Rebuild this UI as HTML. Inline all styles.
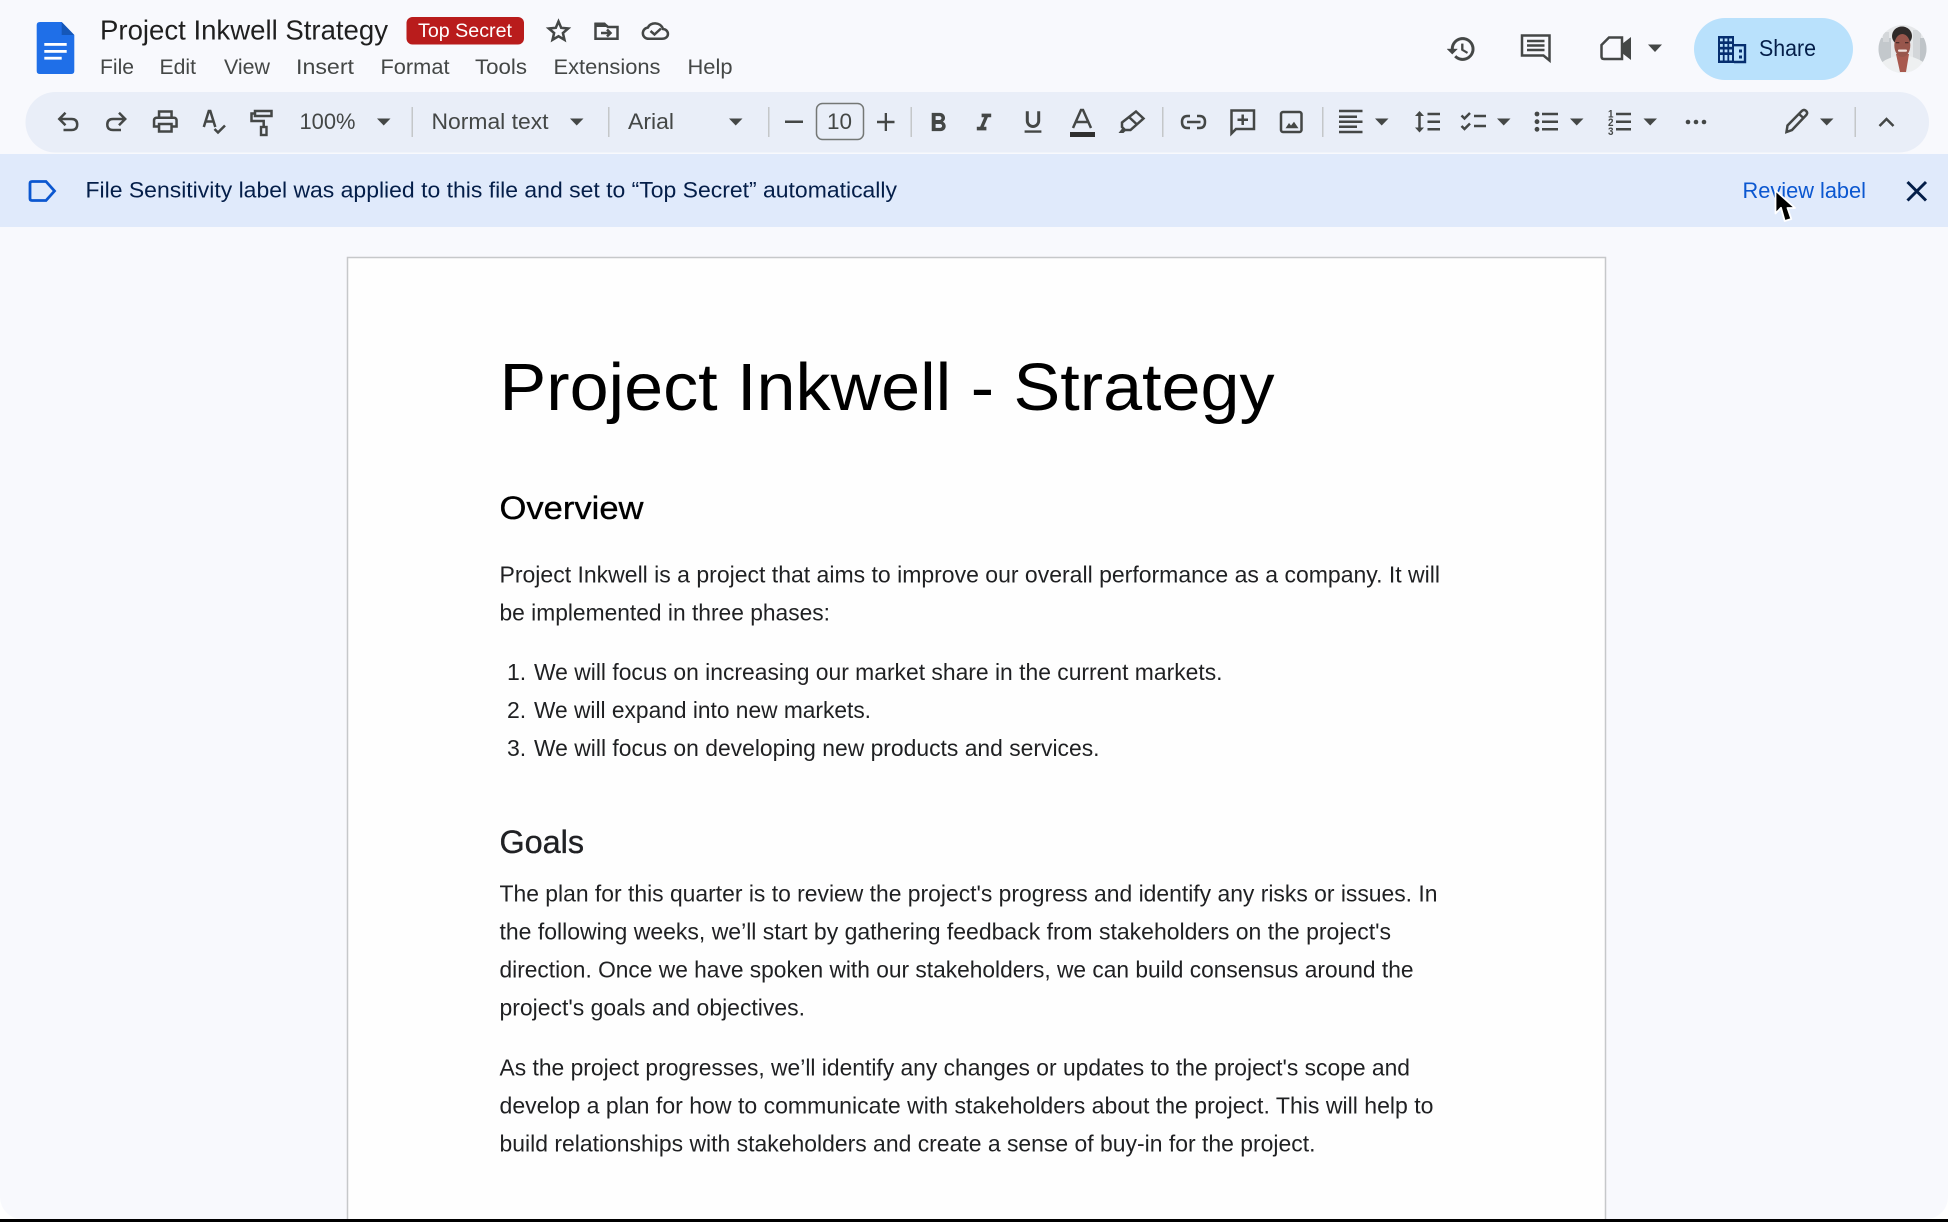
<!DOCTYPE html>
<html><head><meta charset="utf-8"><title>Project Inkwell Strategy</title>
<style>
html,body{margin:0;padding:0;background:#fff;width:1948px;height:1222px;overflow:hidden}
svg{display:block}
text{font-family:"Liberation Sans",Arial,sans-serif;fill:#1f1f1f}
.b{font-size:23px;fill:#1f2022}
.m{font-size:21.5px;fill:#444746}
.t{font-size:22.5px;fill:#444746}
.i{fill:#444746}
.s{fill:none;stroke:#444746;stroke-width:2.5}
</style></head><body>
<svg xmlns="http://www.w3.org/2000/svg" width="1948" height="1222" viewBox="0 0 1948 1222">
<defs><clipPath id="av"><circle cx="1902.5" cy="49" r="24"/></clipPath></defs>
<rect width="1948" height="1222" fill="#fff"/>
<rect x="0" y="-40" width="1948" height="1259" rx="22" fill="#f8f9fd"/>
<rect y="1219" width="1948" height="3" fill="#000"/>

<!-- logo -->
<path d="M40 22H61.7L74.3 35V71Q74.3 74 71 74H40Q36.7 74 36.7 71V25Q36.7 22 40 22Z" fill="#1f6fe8"/>
<path d="M61.7 22L74.3 35H61.7Z" fill="#1557b8"/>
<rect x="44.3" y="43" width="22.4" height="2.8" fill="#fff"/><rect x="44.3" y="50" width="22.4" height="2.8" fill="#fff"/><rect x="44.3" y="56.8" width="17.4" height="2.8" fill="#fff"/>

<!-- title row -->
<text x="100" y="39.5" font-size="27.5" textLength="288" lengthAdjust="spacingAndGlyphs" style="fill:#1f1f1f">Project Inkwell Strategy</text>
<rect x="406.5" y="17" width="117.5" height="27.5" rx="6" fill="#b91c1c"/>
<text x="418" y="37" font-size="19.5" textLength="94" lengthAdjust="spacingAndGlyphs" style="fill:#fff">Top Secret</text>
<path class="i" stroke="#444746" stroke-width=".5" transform="translate(558.500,31) scale(1.2) translate(-12,-12)" d="M22 9.24l-7.19-.62L12 2 9.19 8.63 2 9.24l5.46 4.73L5.82 21 12 17.27 18.18 21l-1.63-7.03L22 9.24zM12 15.4l-3.76 2.27 1-4.28-3.32-2.88 4.38-.38L12 6.1l1.71 4.04 4.38.38-3.32 2.88 1 4.28L12 15.4z"/>
<path class="s" d="M595.500 24H604.500L608 27H617.500V38.800H595.500Z"/><path class="i" d="M594.500 22.500H605L608.500 27H594.500Z"/><path class="s" stroke-width="2.200" d="M601 33H610.500M607 29.500L610.500 33L607 36.500"/>
<path class="s" d="M649 38.800H662C670 38.800 669.500 29.500 663 29C660.500 21.500 650 22 648 27.500C641 28.500 641 38.800 649 38.800Z"/><path class="s" stroke-width="2.200" d="M650.500 31L654.500 34.500L661 28.500"/>

<!-- menu -->
<text class="m" x="100" y="74" textLength="34" lengthAdjust="spacingAndGlyphs">File</text>
<text class="m" x="159.500" y="74" textLength="36.500" lengthAdjust="spacingAndGlyphs">Edit</text>
<text class="m" x="224" y="74" textLength="46" lengthAdjust="spacingAndGlyphs">View</text>
<text class="m" x="296" y="74" textLength="58" lengthAdjust="spacingAndGlyphs">Insert</text>
<text class="m" x="380.500" y="74" textLength="69" lengthAdjust="spacingAndGlyphs">Format</text>
<text class="m" x="475" y="74" textLength="52" lengthAdjust="spacingAndGlyphs">Tools</text>
<text class="m" x="553.500" y="74" textLength="107" lengthAdjust="spacingAndGlyphs">Extensions</text>
<text class="m" x="687.500" y="74" textLength="45" lengthAdjust="spacingAndGlyphs">Help</text>

<!-- top right -->
<path class="i" stroke="#444746" stroke-width=".3" transform="translate(1462,49) scale(1.3) translate(-12.500,-12)" d="M13 3c-4.970 0-9 4.030-9 9H1l3.890 3.890.07.14L9 12H6c0-3.870 3.130-7 7-7s7 3.130 7 7-3.130 7-7 7c-1.930 0-3.680-.79-4.940-2.060l-1.420 1.420C8.270 19.990 10.510 21 13 21c4.970 0 9-4.030 9-9s-4.030-9-9-9zm-1 5v5l4.280 2.540.72-1.210-3.500-2.080V8H12z"/>
<path class="s" d="M1522 35.500H1549.500V60.500L1543.500 55.500H1522Z" stroke-width="2.800"/><path class="s" d="M1527 41H1544.500M1527 45.500H1544.500M1527 50H1544.500" stroke-width="2.400"/>
<path class="s" stroke-width="3" d="M1609 37.500H1622V59H1604Q1601.500 59 1601.500 56.500V45Z"/><path class="i" d="M1622 44L1631 37V60L1622 53Z"/>
<path class="i" d="M1648 44.500H1662L1655 52Z"/>
<rect x="1694" y="18" width="159" height="62" rx="31" fill="#b9e1fc"/>
<rect x="1718" y="36" width="16" height="27" fill="#062e6f"/>
<g fill="#b9e1fc">
<rect x="1720" y="38.500" width="2.800" height="2.800"/><rect x="1724.600" y="38.500" width="2.800" height="2.800"/><rect x="1729.200" y="38.500" width="2.800" height="2.800"/>
<rect x="1720" y="44" width="2.800" height="2.800"/><rect x="1724.600" y="44" width="2.800" height="2.800"/><rect x="1729.200" y="44" width="2.800" height="2.800"/>
<rect x="1720" y="49.500" width="2.800" height="2.800"/><rect x="1724.600" y="49.500" width="2.800" height="2.800"/><rect x="1729.200" y="49.500" width="2.800" height="2.800"/>
<rect x="1720" y="55" width="2.800" height="5.500"/><rect x="1724.600" y="55" width="2.800" height="5.500"/><rect x="1729.200" y="55" width="2.800" height="5.500"/>
</g>
<path d="M1734 45.200H1745V62H1734" fill="none" stroke="#062e6f" stroke-width="2.400"/>
<rect x="1739" y="49.500" width="3" height="3" fill="#062e6f"/><rect x="1739" y="55.500" width="3" height="3" fill="#062e6f"/>
<text x="1759" y="56" font-size="23" textLength="57" lengthAdjust="spacingAndGlyphs" style="fill:#041e49">Share</text>
<g clip-path="url(#av)">
<rect x="1878" y="25" width="50" height="48" fill="#e6e8ea"/>
<rect x="1878" y="38" width="13" height="24" fill="#c3c8cc"/><rect x="1883" y="32" width="6" height="10" fill="#d4d7da"/><rect x="1913" y="30" width="8" height="30" fill="#d3d6d9"/><rect x="1920" y="38" width="8" height="24" fill="#bfc4c8"/>
<path d="M1878 73V66Q1884 59 1896 56H1909Q1921 59 1928 66V73Z" fill="#eef0f1"/>
<path d="M1896 54H1909L1906 72H1900Z" fill="#a8594e"/>
<ellipse cx="1902" cy="36" rx="10" ry="9.500" fill="#2f2a29"/>
<ellipse cx="1902.300" cy="45.500" rx="8" ry="11.500" fill="#98564c"/>
<path d="M1893.500 36Q1902 30 1911 36V32Q1902 26 1893.500 32Z" fill="#2f2a29"/>
<rect x="1898" y="49.500" width="9" height="2.200" rx="1" fill="#efe0db"/>
<rect x="1895.800" y="42" width="3.500" height="1.300" fill="#4a2b28"/><rect x="1905" y="42" width="3.500" height="1.300" fill="#4a2b28"/>
</g>

<!-- toolbar -->
<rect x="25.500" y="92" width="1903.500" height="60.500" rx="30" fill="#e9eef8"/>
<path class="s" d="M59.500 119H71.500Q77.200 119 77.200 124.500Q77.200 130 71.500 130H63.500M65.500 112.800L59.300 119L65.500 125.200"/>
<path class="s" d="M125 119H113Q107.300 119 107.300 124.500Q107.300 130 113 130H121M119 112.800L125.200 119L119 125.200"/>
<path class="i" transform="translate(165.300,121.500) scale(1.25) translate(-12,-12)" d="M19 8h-1V3H6v5H5c-1.660 0-3 1.340-3 3v6h4v4h12v-4h4v-6c0-1.660-1.340-3-3-3zM8 5h8v3H8V5zm8 12v2H8v-4h8v2zm2-2v-2H6v2H4v-4c0-.55.45-1 1-1h14c.55 0 1 .45 1 1v4h-2z"/>
<path class="s" stroke-width="2.300" d="M203.800 127L208.800 111H210.300L215.300 127M205.500 121.500H213.500M214.500 129L218 132.500L225 125.500"/>
<path class="s" stroke-width="2.600" d="M255 111H271.500V116H255ZM255 113.500H251.500V121H263.700V127"/><rect x="261" y="127" width="5.500" height="8" fill="none" stroke="#444746" stroke-width="2.400"/>
<text class="t" x="299.500" y="129" textLength="56" lengthAdjust="spacingAndGlyphs">100%</text>
<path class="i" d="M377 118.500H390.500L383.700 125.500Z"/>
<rect x="411.500" y="107" width="1.500" height="30" fill="#c4c7c9"/>
<text class="t" x="431.500" y="129" textLength="117" lengthAdjust="spacingAndGlyphs">Normal text</text>
<path class="i" d="M570 118.500H583.500L576.700 125.500Z"/>
<rect x="608" y="107" width="1.500" height="30" fill="#c4c7c9"/>
<text class="t" x="628" y="129" textLength="46" lengthAdjust="spacingAndGlyphs">Arial</text>
<path class="i" d="M729 118.500H742.500L735.700 125.500Z"/>
<rect x="768" y="107" width="1.500" height="30" fill="#c4c7c9"/>
<rect x="785" y="120.500" width="18" height="2.500" class="i"/>
<rect x="816.500" y="103.500" width="47" height="36" rx="6" fill="none" stroke="#747775" stroke-width="1.500"/>
<text class="t" x="827" y="129" textLength="25" lengthAdjust="spacingAndGlyphs">10</text>
<path class="i" d="M877 120.800H884.700V113H887V120.800H894.500V123.200H887V131H884.700V123.200H877Z"/>
<rect x="910.500" y="107" width="1.500" height="30" fill="#c4c7c9"/>
<path class="i" transform="translate(938.600,122) scale(1.3) translate(-12.300,-11)" d="M15.600 10.790c.97-.67 1.650-1.770 1.650-2.790 0-2.260-1.750-4-4-4H7v14h7.040c2.090 0 3.710-1.700 3.710-3.790 0-1.520-.86-2.820-2.150-3.420zM10 6.500h3c.83 0 1.500.67 1.500 1.500s-.67 1.500-1.500 1.500h-3v-3zm3.500 9H10v-3h3.500c.83 0 1.500.67 1.500 1.500s-.67 1.500-1.500 1.500z"/>
<path class="i" transform="translate(984,122) scale(1.2) translate(-12,-11)" d="M10 4v3h2.210l-3.420 8H6v3h8v-3h-2.210l3.420-8H18V4z"/>
<path class="i" transform="translate(1033,122) scale(1.2) translate(-12,-12)" d="M12 17c3.310 0 6-2.690 6-6V3h-2.500v8c0 1.930-1.570 3.500-3.500 3.500S8.500 12.930 8.500 11V3H6v8c0 3.310 2.690 6 6 6zm-7 2v2h14v-2H5z"/>
<path class="s" stroke-width="2.300" d="M1073 128L1081 110H1083L1091 128M1076 122H1088"/>
<rect x="1070" y="132" width="25" height="5" fill="#303030"/>
<path class="s" stroke-width="2.400" d="M1136 111.500L1143.500 118.500L1130.500 130H1125L1122 127V122.500Z"/><path class="i" d="M1118.500 133L1122.500 128L1125.500 131L1123.500 133Z"/><path class="s" stroke-width="2" d="M1129.500 117.500L1137 124.500"/>
<rect x="1162" y="107" width="1.500" height="30" fill="#c4c7c9"/>
<path class="s" stroke-width="2.500" d="M1190 116H1187.500Q1182 116 1182 122Q1182 128 1187.500 128H1190M1197 116H1199.500Q1205 116 1205 122Q1205 128 1199.500 128H1197M1187 122H1200.500"/>
<path class="s" stroke-width="2.600" d="M1231.500 110.500H1254V129H1236L1231.500 133.500Z"/><path class="s" stroke-width="2.200" d="M1242.700 114.500V125M1237.500 119.700H1248"/>
<rect x="1281" y="112" width="20.500" height="20" rx="2" fill="none" stroke="#444746" stroke-width="2.500"/><path class="i" d="M1285.500 128.300L1289 123L1291 125.500L1294 121.800L1298.500 128.300Z"/>
<rect x="1322" y="107" width="1.500" height="30" fill="#c4c7c9"/>
<path class="s" stroke-width="2" d="M1339 111H1362.500M1339 116.700H1357M1339 121.700H1362.500M1339 126.700H1357M1339 132H1362.500"/>
<path class="i" d="M1375 118.500H1388.500L1381.700 125.500Z"/>
<path class="s" stroke-width="2.500" d="M1419.500 114V130"/><path class="i" d="M1415 116L1419.500 111L1424 116ZM1415 127.500L1419.500 132.500L1424 127.500Z"/><path class="s" d="M1427.500 114H1440M1427.500 121.700H1440M1427.500 129.300H1440"/>
<path class="s" stroke-width="2.500" d="M1461.500 115.500L1464.500 118.500L1470 113M1461.500 126L1464.500 129L1470 123.500M1474 116H1486M1474 126H1486"/>
<path class="i" d="M1497 118.500H1510.500L1503.700 125.500Z"/>
<circle class="i" cx="1537" cy="114" r="2.400"/><circle class="i" cx="1537" cy="121.700" r="2.400"/><circle class="i" cx="1537" cy="129.300" r="2.400"/><path class="s" d="M1542 114H1558M1542 121.700H1558M1542 129.300H1558"/>
<path class="i" d="M1570 118.500H1583.500L1576.700 125.500Z"/>
<text x="1608" y="117.500" font-size="11" textLength="5.500" lengthAdjust="spacingAndGlyphs" style="fill:#444746;font-weight:700">1</text><text x="1608" y="126" font-size="11" textLength="5.500" lengthAdjust="spacingAndGlyphs" style="fill:#444746;font-weight:700">2</text><text x="1608" y="135" font-size="11" textLength="5.500" lengthAdjust="spacingAndGlyphs" style="fill:#444746;font-weight:700">3</text>
<path class="s" d="M1616 114H1631M1616 121.700H1631M1616 129.300H1631"/>
<path class="i" d="M1643.500 118.500H1657L1650.200 125.500Z"/>
<circle class="i" cx="1688" cy="122" r="2.300"/><circle class="i" cx="1696" cy="122" r="2.300"/><circle class="i" cx="1704" cy="122" r="2.300"/>
<path class="s" stroke-width="2.700" d="M1786.500 132L1787.500 125.500L1802 110.800Q1804 109 1806 110.800Q1808 112.800 1806.500 114.800L1792 130L1786.500 132ZM1799 114L1803.500 118"/>
<path class="i" d="M1820 118.500H1833.500L1826.700 125.500Z"/>
<rect x="1854.500" y="107" width="1.500" height="30" fill="#c4c7c9"/>
<path class="s" stroke-width="2.600" d="M1879.500 126L1886.500 119L1893.500 126"/>

<!-- banner -->
<rect y="154" width="1948" height="73" fill="#e0eafb"/>
<path d="M32 181.500H46L54.500 191L46 200.500H32Q30 200.500 30 198.500V183.500Q30 181.500 32 181.500Z" fill="none" stroke="#0b57d0" stroke-width="2.800"/>
<text x="85.500" y="197.500" font-size="22.500" textLength="811.500" lengthAdjust="spacingAndGlyphs" style="fill:#041e49">File Sensitivity label was applied to this file and set to “Top Secret” automatically</text>
<text x="1742.500" y="198" font-size="22.500" textLength="123.500" lengthAdjust="spacingAndGlyphs" style="fill:#0b57d0">Review label</text>
<path d="M1907.500 182L1926 200.500M1926 182L1907.500 200.500" stroke="#041e49" stroke-width="3" fill="none"/>
<path d="M1775.500 190.500V213.500L1781 207.800L1784.700 221L1791.300 219L1787.500 208H1795Z" fill="#000" stroke="#fff" stroke-width="1.800" stroke-linejoin="round"/>

<!-- document -->
<rect x="347.500" y="257.500" width="1258" height="1000" fill="#fefefe" stroke="#c6c8ca" stroke-width="1.500"/>
<rect y="1219" width="1948" height="3" fill="#000"/>
<text x="499.500" y="410" font-size="67" textLength="775" lengthAdjust="spacingAndGlyphs" style="fill:#000">Project Inkwell - Strategy</text>
<text x="499.500" y="519" font-size="32" textLength="144" lengthAdjust="spacingAndGlyphs" stroke="#000" stroke-width=".35" style="fill:#000">Overview</text>
<text class="b" x="499.500" y="582.500" textLength="940.500" lengthAdjust="spacingAndGlyphs">Project Inkwell is a project that aims to improve our overall performance as a company. It will</text>
<text class="b" x="499.500" y="620.500" textLength="330.500" lengthAdjust="spacingAndGlyphs">be implemented in three phases:</text>
<text class="b" x="507" y="680">1.</text>
<text class="b" x="534" y="680" textLength="688.500" lengthAdjust="spacingAndGlyphs">We will focus on increasing our market share in the current markets.</text>
<text class="b" x="507" y="718">2.</text>
<text class="b" x="534" y="718" textLength="337" lengthAdjust="spacingAndGlyphs">We will expand into new markets.</text>
<text class="b" x="507" y="756">3.</text>
<text class="b" x="534" y="756" textLength="565.500" lengthAdjust="spacingAndGlyphs">We will focus on developing new products and services.</text>
<text x="499.500" y="853" font-size="32" textLength="84.500" lengthAdjust="spacingAndGlyphs" stroke="#202124" stroke-width=".35" style="fill:#202124">Goals</text>
<text class="b" x="499.500" y="901.500" textLength="938" lengthAdjust="spacingAndGlyphs">The plan for this quarter is to review the project's progress and identify any risks or issues. In</text>
<text class="b" x="499.500" y="939.500" textLength="891.500" lengthAdjust="spacingAndGlyphs">the following weeks, we’ll start by gathering feedback from stakeholders on the project's</text>
<text class="b" x="499.500" y="977.500" textLength="914" lengthAdjust="spacingAndGlyphs">direction. Once we have spoken with our stakeholders, we can build consensus around the</text>
<text class="b" x="499.500" y="1015.500" textLength="305.500" lengthAdjust="spacingAndGlyphs">project's goals and objectives.</text>
<text class="b" x="499.500" y="1075.500" textLength="910.500" lengthAdjust="spacingAndGlyphs">As the project progresses, we’ll identify any changes or updates to the project's scope and</text>
<text class="b" x="499.500" y="1113.500" textLength="934" lengthAdjust="spacingAndGlyphs">develop a plan for how to communicate with stakeholders about the project. This will help to</text>
<text class="b" x="499.500" y="1151.500" textLength="816" lengthAdjust="spacingAndGlyphs">build relationships with stakeholders and create a sense of buy-in for the project.</text>
</svg>
</body></html>
